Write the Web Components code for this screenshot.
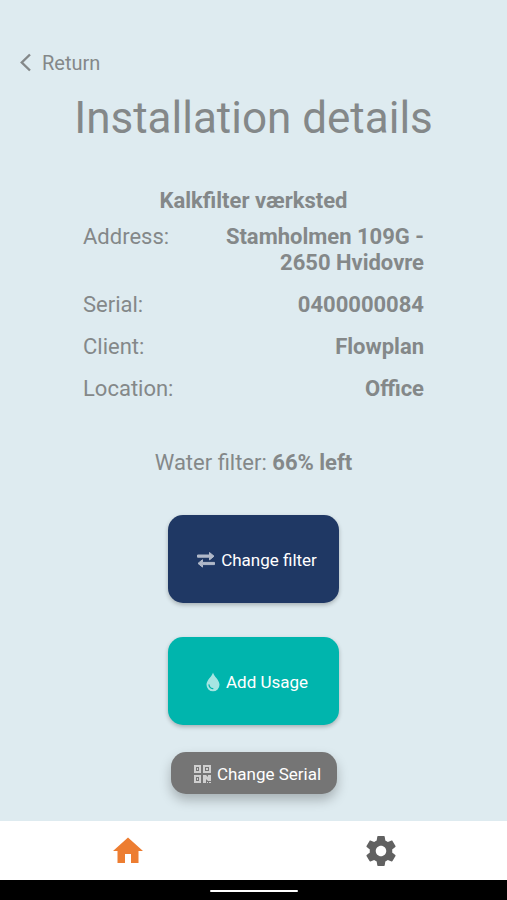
<!DOCTYPE html>
<html lang="en">
<head>
<meta charset="utf-8">
<meta name="viewport" content="width=device-width, initial-scale=1">
<title>Installation details</title>
<style>
  body {
    margin: 0;
    background: #deebf0;
    color: #848889;
    font-family: Roboto, "Liberation Sans", sans-serif;
    font-size: 22px;
    line-height: 26px;
  }
</style>
</head>
<body>
<app-screen>
  <back-link slot="top" href="#home">Return</back-link>
  <page-title>Installation details</page-title>
  <installation-info name="Kalkfilter værksted">
    <info-row label="Address:">Stamholmen 109G - 2650 Hvidovre</info-row>
    <info-row label="Serial:">0400000084</info-row>
    <info-row label="Client:">Flowplan</info-row>
    <info-row label="Location:">Office</info-row>
  </installation-info>
  <filter-status label="Water filter:">66% left</filter-status>
  <action-list>
    <action-button icon="exchange" kind="primary">Change filter</action-button>
    <action-button icon="drop" kind="accent">Add Usage</action-button>
    <action-button icon="qr" kind="small">Change Serial</action-button>
  </action-list>
  <tab-bar slot="bottom"></tab-bar>
  <system-bar slot="bottom"></system-bar>
</app-screen>

<script>
const icons = {
  exchange: `<svg width="20" height="20" viewBox="0 0 20 20" fill="currentColor" stroke="currentColor" stroke-linejoin="round">
    <path d="M1.500 5h12V2.500l4.500 3.700-4.500 3.700V7.200h-12z"/><path d="M18.500 14.600h-12v2.500L2 13.400l4.500-3.700v2.700h12z"/></svg>`,
  drop: `<svg width="16" height="20" viewBox="0 0 16 20">
    <path fill="currentColor" d="M8 0.500C7 4.500 1.500 8 1.500 12.800a6.500 6.500 0 0 0 13 0C14.500 8 9 4.500 8 .5z"/>
    <path fill="none" stroke="#00b5ad" stroke-width="1.300" stroke-linecap="round" d="M4 12.800c.2 2.200 1.600 3.600 3.800 3.800"/></svg>`,
  qr: `<svg width="20" height="20" viewBox="0 0 20 20" fill="currentColor">
    <path fill-rule="evenodd" d="M2 1h7v8H2zM4 3v4h3V3zM11 1h8v8h-8zM13 3v4h4V3zM2 11h7v8H2zM4 13v4h3v-4z"/>
    <path d="M5 4h1v2H5zM14 4h2v2h-2zM5 14h1v2H5zM11 11h3l2 2v-2h3v6h-3l-2-2v4h-3zM15 18h1v1h-1zM17 18h2v1h-2z"/></svg>`
};

class AppScreen extends HTMLElement {
  connectedCallback() {
    this.attachShadow({ mode: 'open' });
    this.shadowRoot.innerHTML = `
      <style>
        :host {
          display: flex;
          flex-direction: column;
          min-height: 100vh;
        }
        header {
          padding: 50px 20px 0;
        }
        main {
          flex: 1;
          display: flex;
          flex-direction: column;
          align-items: center;
          padding: 16px 20px 27px;
        }
      </style>
      <header><slot name="top"></slot></header>
      <main><slot></slot></main>
      <slot name="bottom"></slot>
    `;
  }
}
customElements.define('app-screen', AppScreen);

class BackLink extends HTMLElement {
  connectedCallback() {
    this.attachShadow({ mode: 'open' });
    this.shadowRoot.innerHTML = `
      <style>
        :host {
          display: flex;
        }
        a {
          display: flex;
          align-items: center;
          gap: 10px;
          color: inherit;
          font-size: 20px;
          text-decoration: none;
        }
      </style>
      <a href="${this.getAttribute('href')}">
        <svg width="12" height="20" viewBox="0 0 12 20" fill="none" stroke="currentColor" stroke-width="2.400"><path d="M10 1.500L1.800 9.500l8.200 8"/></svg>
        <slot></slot>
      </a>
    `;
  }
}
customElements.define('back-link', BackLink);

class PageTitle extends HTMLElement {
  connectedCallback() {
    this.attachShadow({ mode: 'open' });
    this.shadowRoot.innerHTML = `
      <style>
        :host {
          display: block;
          text-align: center;
        }
        h1 {
          margin: 0;
          font-size: 44px;
          font-weight: 400;
          line-height: 52px;
        }
      </style>
      <h1><slot></slot></h1>
    `;
  }
}
customElements.define('page-title', PageTitle);

class InstallationInfo extends HTMLElement {
  connectedCallback() {
    this.attachShadow({ mode: 'open' });
    this.shadowRoot.innerHTML = `
      <style>
        :host {
          display: block;
          width: 100%;
          max-width: 341px;
          margin-top: 44px;
        }
        h2 {
          margin: 0 0 10px;
          font-size: 22px;
          font-weight: 700;
          text-align: center;
        }
        .rows {
          display: flex;
          flex-direction: column;
          gap: 16px;
        }
      </style>
      <h2>${this.getAttribute('name')}</h2>
      <div class="rows"><slot></slot></div>
    `;
  }
}
customElements.define('installation-info', InstallationInfo);

class InfoRow extends HTMLElement {
  connectedCallback() {
    this.attachShadow({ mode: 'open' });
    this.shadowRoot.innerHTML = `
      <style>
        :host {
          display: flex;
          justify-content: space-between;
        }
        b {
          max-width: 60%;
          text-align: right;
        }
      </style>
      <span>${this.getAttribute('label')}</span>
      <b><slot></slot></b>
    `;
  }
}
customElements.define('info-row', InfoRow);

class FilterStatus extends HTMLElement {
  connectedCallback() {
    this.attachShadow({ mode: 'open' });
    this.shadowRoot.innerHTML = `
      <style>
        :host {
          display: block;
          margin-top: 48px;
        }
      </style>
      ${this.getAttribute('label')} <b><slot></slot></b>
    `;
  }
}
customElements.define('filter-status', FilterStatus);

class ActionList extends HTMLElement {
  connectedCallback() {
    this.attachShadow({ mode: 'open' });
    this.shadowRoot.innerHTML = `
      <style>
        :host {
          display: flex;
          flex-direction: column;
          align-items: center;
          gap: 34px;
          margin-top: 39px;
        }
        ::slotted([kind="small"]) {
          margin-top: -7px;
        }
      </style>
      <slot></slot>
    `;
  }
}
customElements.define('action-list', ActionList);

class ActionButton extends HTMLElement {
  connectedCallback() {
    this.attachShadow({ mode: 'open' });
    this.shadowRoot.innerHTML = `
      <style>
        :host {
          display: block;
        }
        button {
          display: flex;
          align-items: center;
          justify-content: center;
          gap: 5px;
          width: 171px;
          height: 88px;
          padding: 2px 0 0 6px;
          border: 0;
          border-radius: 15px;
          background: #1f3864;
          box-shadow: 0 2px 4px rgba(0, 0, 0, 0.25);
          color: #fff;
          font: 17px/22px Roboto, "Liberation Sans", sans-serif;
          cursor: pointer;
        }
        svg {
          display: block;
          opacity: 0.65;
        }
        :host([kind="accent"]) button {
          background: #00b5ad;
        }
        :host([kind="small"]) button {
          width: 166px;
          height: 42px;
          background: #757575;
          box-shadow: 0 6px 12px rgba(0, 0, 0, 0.25);
        }
      </style>
      <button type="button">${icons[this.getAttribute('icon')]}<span><slot></slot></span></button>
    `;
  }
}
customElements.define('action-button', ActionButton);

class TabBar extends HTMLElement {
  connectedCallback() {
    this.attachShadow({ mode: 'open' });
    this.shadowRoot.innerHTML = `
      <style>
        nav {
          display: flex;
          height: 59px;
          background: #fff;
        }
        a {
          flex: 1;
          display: flex;
          align-items: center;
          justify-content: center;
          padding: 1px 0 0 2px;
          color: #616161;
        }
        .active {
          color: #ed7d31;
        }
      </style>
      <nav>
        <a class="active" href="#home" aria-label="Home">
          <svg width="36" height="36" viewBox="0 0 24 24" fill="currentColor"><path d="M10 20v-6h4v6h5v-8h3L12 3 2 12h3v8z"/></svg>
        </a>
        <a href="#settings" aria-label="Settings">
          <svg width="36" height="36" viewBox="0 0 24 24" fill="currentColor"><path d="M19.430 12.980c.04-.32.07-.64.07-.98s-.03-.66-.07-.98l2.110-1.650c.19-.15.24-.42.12-.64l-2-3.460c-.12-.22-.39-.3-.61-.22l-2.490 1c-.52-.4-1.080-.73-1.690-.98l-.38-2.650C14.460 2.180 14.250 2 14 2h-4c-.25 0-.46.18-.49.42l-.38 2.650c-.61.25-1.170.59-1.690.98l-2.490-1c-.23-.09-.49 0-.61.22l-2 3.460c-.13.22-.07.49.12.64l2.110 1.650c-.04.32-.07.65-.07.98s.03.66.07.98l-2.110 1.650c-.19.15-.24.42-.12.64l2 3.460c.12.22.39.3.61.22l2.490-1c.52.4 1.080.73 1.690.98l.38 2.650c.03.24.24.42.49.42h4c.25 0 .46-.18.49-.42l.38-2.650c.61-.25 1.170-.59 1.690-.98l2.490 1c.23.09.49 0 .61-.22l2-3.460c.12-.22.07-.49-.12-.64l-2.110-1.650zM12 15.500c-1.930 0-3.500-1.570-3.500-3.500s1.570-3.500 3.500-3.500 3.500 1.570 3.500 3.500-1.570 3.500-3.500 3.500z"/></svg>
        </a>
      </nav>
    `;
  }
}
customElements.define('tab-bar', TabBar);

class SystemBar extends HTMLElement {
  connectedCallback() {
    this.attachShadow({ mode: 'open' });
    this.shadowRoot.innerHTML = `
      <style>
        :host {
          display: flex;
          align-items: center;
          justify-content: center;
          height: 20px;
          padding-top: 2px;
          box-sizing: border-box;
          background: #000;
        }
        span {
          width: 88px;
          height: 2px;
          border-radius: 1px;
          background: #fff;
        }
      </style>
      <span></span>
    `;
  }
}
customElements.define('system-bar', SystemBar);
</script>
</body>
</html>
